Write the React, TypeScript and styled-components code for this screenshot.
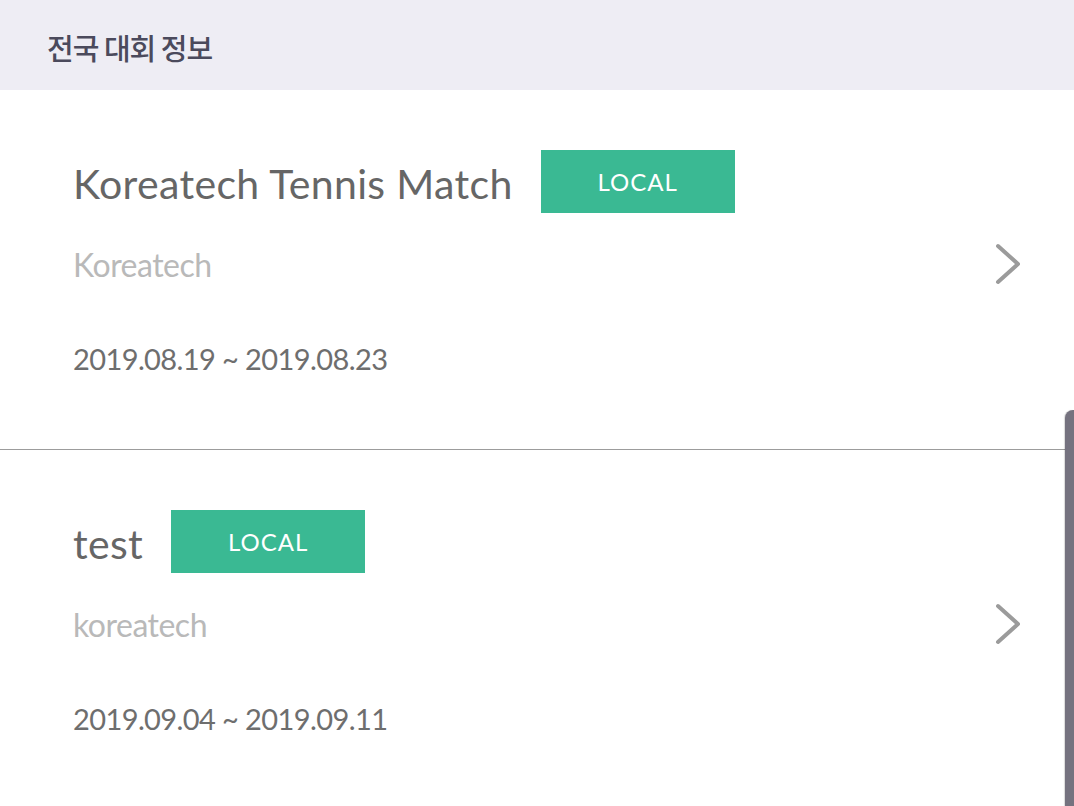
import React from "react";
import styled, { createGlobalStyle } from "styled-components";

const Global = createGlobalStyle`
  html, body { margin: 0; padding: 0; background: #ffffff; }
  body { font-family: Lato, "Noto Sans CJK KR", sans-serif; overflow: hidden; }
  * { box-sizing: border-box; }
`;

const Page = styled.div`
  position: relative;
  width: 1074px;
  height: 806px;
  overflow: hidden;
  background: #ffffff;
`;

const Header = styled.header`
  height: 90px;
  background: #eeedf4;
  display: flex;
  align-items: center;
  padding-left: 47px;
  padding-top: 4px;
  font-family: "Noto Sans CJK KR", sans-serif;
  font-weight: 500;
  font-size: 29px;
  color: #4b4a5c;
  letter-spacing: -1px;
`;

const List = styled.div`
  display: flex;
  flex-direction: column;
`;

const Item = styled.div`
  height: 360px;
  padding: 60px 52px 0 73px;
  display: flex;
  flex-direction: column;
  border-bottom: 1px solid #9c9c9c;
`;

const TitleRow = styled.div`
  display: flex;
  align-items: center;
  gap: 28px;
  height: 63px;
`;

const Title = styled.div`
  font-size: 41px;
  color: #666666;
  line-height: 1;
  letter-spacing: 0.35px;
  padding-top: 4px;
`;

const Badge = styled.div`
  width: 194px;
  height: 63px;
  background: #3ab993;
  color: #ffffff;
  font-size: 24px;
  letter-spacing: 1px;
  display: flex;
  align-items: center;
  justify-content: center;
`;

const SubRow = styled.div`
  display: flex;
  align-items: center;
  justify-content: space-between;
  margin-top: 30px;
  height: 42px;
`;

const Sub = styled.div`
  font-size: 32px;
  color: #b9b9b9;
  letter-spacing: -0.5px;
`;

const DateText = styled.div`
  margin-top: 56px;
  font-size: 29px;
  color: #6e6e6e;
  letter-spacing: -0.6px;
`;

const Scrollbar = styled.div`
  position: absolute;
  right: 0;
  top: 410px;
  bottom: 0;
  width: 9px;
  background: #75727f;
  border-top-left-radius: 8px;
  box-shadow: -1px 0 1px rgba(0,0,0,0.15);
`;

const Chevron = () => (
  <svg width="28" height="42" viewBox="0 0 28 42" fill="none">
    <path d="M4 3 L24 21 L4 39" stroke="#9b9b9b" strokeWidth="4" strokeLinecap="round" strokeLinejoin="round" />
  </svg>
);

const items = [
  { title: "Koreatech Tennis Match", sub: "Koreatech", date: "2019.08.19 ~ 2019.08.23" },
  { title: "test", sub: "koreatech", date: "2019.09.04 ~ 2019.09.11" },
];

export default function App() {
  return (
    <Page>
      <Global />
      <Header>전국 대회 정보</Header>
      <List>
        {items.map((it) => (
          <Item key={it.title}>
            <TitleRow>
              <Title>{it.title}</Title>
              <Badge>LOCAL</Badge>
            </TitleRow>
            <SubRow>
              <Sub>{it.sub}</Sub>
              <Chevron />
            </SubRow>
            <DateText>{it.date}</DateText>
          </Item>
        ))}
      </List>
      <Scrollbar />
    </Page>
  );
}
